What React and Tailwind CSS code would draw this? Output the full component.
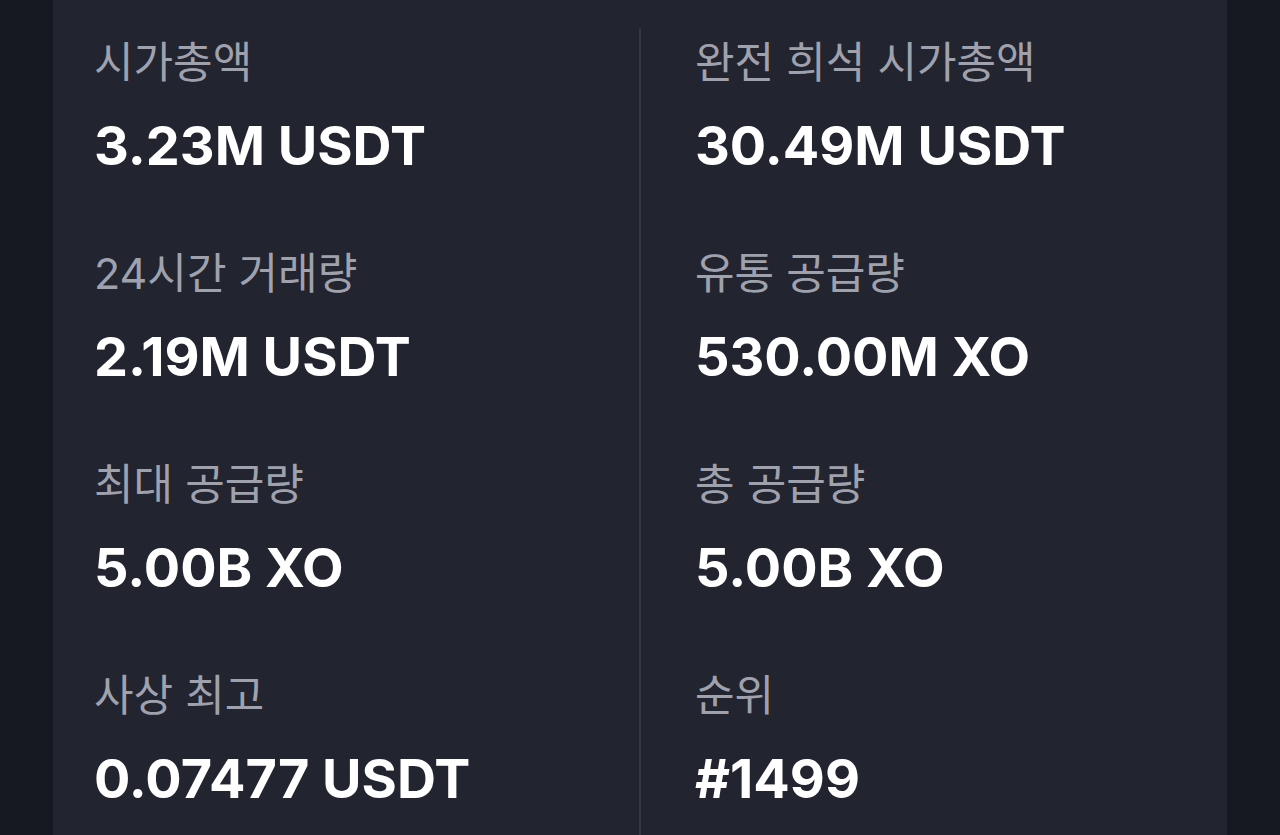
export default function App() {
  const left = [
    ["시가총액", "3.23M USDT"],
    ["24시간 거래량", "2.19M USDT"],
    ["최대 공급량", "5.00B XO"],
    ["사상 최고", "0.07477 USDT"],
  ];
  const right = [
    ["완전 희석 시가총액", "30.49M USDT"],
    ["유통 공급량", "530.00M XO"],
    ["총 공급량", "5.00B XO"],
    ["순위", "#1499"],
  ];
  const font = { fontFamily: 'Inter, "Noto Sans CJK KR", sans-serif' };
  const Item = ({ label, value }) => (
    <div className="flex flex-col h-[211px]">
      <div className="text-[43px] leading-[56px] text-[#9fa1ad]">{label}</div>
      <div className="mt-[24px] text-[54px] leading-[64px] font-bold text-white">{value}</div>
    </div>
  );
  return (
    <div className="w-[1280px] h-[835px] overflow-hidden bg-[#171922] flex" style={font}>
      <div className="ml-[53px] w-[1174px] h-full bg-[#222430] pt-[28px] grid grid-cols-[586px_1fr]">
        <div className="pl-[41px] pt-[6px]">
          {left.map(([l, v]) => <Item key={l} label={l} value={v} />)}
        </div>
        <div className="border-l-[2px] border-[#353744] pl-[54px] pt-[6px]">
          {right.map(([l, v]) => <Item key={l} label={l} value={v} />)}
        </div>
      </div>
    </div>
  );
}
